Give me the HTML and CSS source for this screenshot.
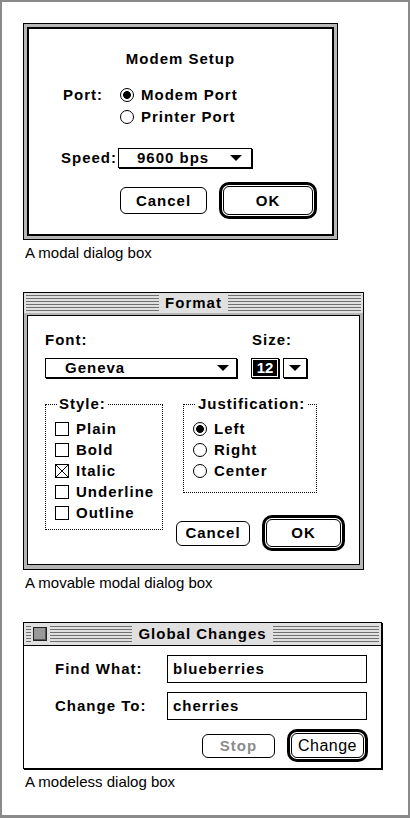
FILE: index.html
```html
<!DOCTYPE html>
<html lang="en">
<head>
    <meta charset="UTF-8">
    <title>Dialog Boxes</title>
    <link rel="stylesheet" href="styles.css">
</head>
<body>
    <div class="page">
        <!-- modal -->
        <section class="figure">
            <div class="dialog modal">
                <div class="modal-body">
                    <h2 class="modal-title">Modem Setup</h2>
                    <div class="port-row">
                        <span class="port-label">Port:</span>
                        <div class="radio-list">
                            <div class="radio on"><span class="rb"></span>Modem Port</div>
                            <div class="radio"><span class="rb"></span>Printer Port</div>
                        </div>
                    </div>
                    <div class="speed-row">
                        <span class="speed-label">Speed:</span>
                        <div class="popup speed-popup"><span>9600 bps</span><span class="arrow"></span></div>
                    </div>
                    <div class="btn-row modal-btns">
                        <button class="btn modal-cancel">Cancel</button>
                        <span class="default-ring modal-ok"><button class="btn">OK</button></span>
                    </div>
                </div>
            </div>
            <p class="caption">A modal dialog box</p>
        </section>

        <!-- movable modal -->
        <section class="figure">
            <div class="dialog movable">
                <div class="titlebar">
                    <span class="stripes"></span>
                    <span class="title-text">Format</span>
                    <span class="stripes"></span>
                </div>
                <div class="frame">
                    <div class="pane format-pane">
                        <div class="field-heads">
                            <span class="font-head">Font:</span>
                            <span>Size:</span>
                        </div>
                        <div class="popups">
                            <div class="popup font-popup"><span>Geneva</span><span class="arrow"></span></div>
                            <div class="size-box"><span>12</span></div>
                            <div class="popup size-popup"><span class="arrow"></span></div>
                        </div>
                        <div class="groups">
                            <div class="group style-group">
                                <span class="group-label">Style:</span>
                                <div class="check"><span class="cb"></span>Plain</div>
                                <div class="check"><span class="cb"></span>Bold</div>
                                <div class="check"><span class="cb"><svg viewBox="0 0 14 14" width="14" height="14"><path d="M1 1L13 13M13 1L1 13" stroke="#000" stroke-width="1"/></svg></span>Italic</div>
                                <div class="check"><span class="cb"></span>Underline</div>
                                <div class="check"><span class="cb"></span>Outline</div>
                            </div>
                            <div class="right-col">
                                <div class="group just-group">
                                    <span class="group-label">Justification:</span>
                                    <div class="radio on"><span class="rb"></span>Left</div>
                                    <div class="radio"><span class="rb"></span>Right</div>
                                    <div class="radio"><span class="rb"></span>Center</div>
                                </div>
                                <div class="btn-row format-btns">
                                    <button class="btn format-cancel">Cancel</button>
                                    <span class="default-ring format-ok"><button class="btn">OK</button></span>
                                </div>
                            </div>
                        </div>
                    </div>
                </div>
            </div>
            <p class="caption">A movable modal dialog box</p>
        </section>

        <!-- modeless -->
        <section class="figure">
            <div class="dialog modeless">
                <div class="titlebar">
                    <span class="tb-side">
                        <span class="stripes stub"></span>
                        <span class="close-box"></span>
                        <span class="stripes"></span>
                    </span>
                    <span class="title-text">Global Changes</span>
                    <span class="stripes"></span>
                </div>
                <div class="pane changes-pane">
                    <div class="find-grid">
                        <span>Find What:</span>
                        <div class="textfield">blueberries</div>
                        <span>Change To:</span>
                        <div class="textfield">cherries</div>
                    </div>
                    <div class="btn-row changes-btns">
                        <button class="btn stop-btn">Stop</button>
                        <span class="default-ring change-ok"><button class="btn change-btn">Change</button></span>
                    </div>
                </div>
            </div>
            <p class="caption">A modeless dialog box</p>
        </section>
    </div>
</body>
</html>
```

FILE: styles.css
```css
body {
    margin: 0;
    background: #fff;
}
.page {
    width: 410px;
    height: 818px;
    box-sizing: border-box;
    border: 2px solid #8a8a8a;
    border-bottom-width: 3px;
    padding: 21px 0 0 21px;
    font-family: "Liberation Sans", Arial, sans-serif;
    color: #000;
}
.figure {
    margin-bottom: 30px;
}
.caption {
    margin: 4px 0 0 2px;
    font-size: 15px;
    line-height: 18px;
}

/* shared dialog bits */
.dialog {
    box-sizing: border-box;
    font-size: 15px;
    font-weight: bold;
    letter-spacing: 1px;
    line-height: 18px;
    background: #fff;
}
.btn-row {
    display: flex;
    align-items: center;
}
.btn {
    box-sizing: border-box;
    border: 1px solid #000;
    border-radius: 6px;
    background: #fff;
    color: #000;
    font: inherit;
    letter-spacing: inherit;
    padding: 0;
}
.default-ring {
    display: flex;
    box-sizing: border-box;
    border: 3px solid #000;
    border-radius: 10px;
    padding: 1px;
}
.default-ring .btn {
    flex: 1;
}
.radio, .check {
    display: flex;
    align-items: center;
}
.rb {
    width: 14px;
    height: 14px;
    box-sizing: border-box;
    border: 1px solid #000;
    border-radius: 50%;
    margin-right: 7px;
    flex: none;
}
.radio.on .rb {
    background: radial-gradient(circle, #000 0 3.6px, #fff 4.2px);
}
.cb {
    width: 14px;
    height: 14px;
    box-sizing: border-box;
    border: 1px solid #000;
    margin-right: 7px;
    flex: none;
    display: flex;
}
.cb svg {
    margin: -1px;
}
.popup {
    display: flex;
    align-items: center;
    justify-content: space-between;
    box-sizing: border-box;
    height: 20px;
    border: 1px solid #000;
    box-shadow: 1px 1px 0 #000;
    background: #fff;
}
.arrow {
    width: 0;
    height: 0;
    border-left: 6px solid transparent;
    border-right: 6px solid transparent;
    border-top: 6px solid #000;
}
.titlebar {
    display: flex;
    align-items: center;
    padding: 0 2px;
    background: #e0e0e0;
}
.stripes {
    flex: 1;
    height: 16px;
    background: repeating-linear-gradient(to bottom, #707070 0 1px, #e0e0e0 1px 3px);
}
.title-text {
    padding: 0 6px;
}

/* modal */
.modal {
    width: 315px;
    height: 217px;
    border: 1px solid #000;
    padding: 3px;
    background: #b6b6b6;
}
.modal-body {
    height: 100%;
    box-sizing: border-box;
    border: 2px solid #000;
    background: #fff;
    padding-top: 21px;
}
.modal-title {
    margin: 0;
    text-align: center;
    font-size: 15px;
    line-height: 18px;
}
.port-row {
    display: flex;
    margin-top: 16px;
    padding-left: 34px;
}
.port-label {
    width: 57px;
    line-height: 22px;
}
.radio-list .radio {
    height: 22px;
}
.speed-row {
    display: flex;
    align-items: center;
    margin-top: 20px;
    padding-left: 32px;
}
.speed-label {
    width: 57px;
}
.speed-popup {
    width: 134px;
    padding: 0 9px 0 18px;
}
.modal-btns {
    margin-top: 14px;
    padding-left: 91px;
}
.modal-cancel {
    width: 87px;
    height: 27px;
    margin-right: 12px;
}
.modal-ok {
    width: 98px;
    height: 37px;
}

/* movable modal */
.movable {
    width: 341px;
    height: 278px;
    border: 1px solid #000;
    display: flex;
    flex-direction: column;
}
.movable .titlebar {
    height: 20px;
}
.frame {
    flex: 1;
    display: flex;
    padding: 2px 3px 4px;
    background: #b6b6b6;
}
.format-pane {
    flex: 1;
    border: 1px solid #000;
    background: #fff;
    padding: 15px 0 0 17px;
}
.field-heads {
    display: flex;
}
.font-head {
    width: 207px;
}
.popups {
    display: flex;
    margin-top: 9px;
}
.font-popup {
    width: 192px;
    padding: 0 7px 0 19px;
}
.size-box {
    box-sizing: border-box;
    width: 28px;
    height: 20px;
    margin-left: 14px;
    border: 1px solid #000;
    box-shadow: 1px 1px 0 #000;
    padding: 1px;
    display: flex;
}
.size-box span {
    flex: 1;
    background: #000;
    color: #fff;
    text-align: center;
    letter-spacing: 0;
    line-height: 16px;
}
.size-popup {
    width: 24px;
    margin-left: 4px;
    justify-content: center;
}
.groups {
    display: flex;
    align-items: flex-start;
    margin-top: 26px;
}
.group {
    box-sizing: border-box;
    border: 1px dotted #000;
    display: flex;
    flex-direction: column;
}
.group-label {
    align-self: flex-start;
    margin-top: -10px;
    padding: 0 2px;
    background: #fff;
}
.group .check, .group .radio {
    height: 21px;
    padding-left: 9px;
}
.style-group {
    width: 118px;
    padding-bottom: 6px;
}
.style-group .group-label {
    margin-left: 11px;
}
.style-group .group-label + .check, .just-group .group-label + .radio {
    margin-top: 5px;
}
.right-col {
    margin-left: 13px;
}
.just-group {
    width: 134px;
    margin-left: 7px;
    padding-bottom: 11px;
}
.just-group .group-label {
    margin-left: 12px;
}
.format-btns {
    margin-top: 22px;
}
.format-cancel {
    width: 74px;
    height: 25px;
    margin-right: 12px;
}
.format-ok {
    width: 83px;
    height: 36px;
}

/* modeless */
.modeless {
    width: 359px;
    height: 147px;
    border: 1px solid #000;
    box-shadow: 1px 1px 0 #000;
}
.modeless .titlebar {
    height: 22px;
    border-bottom: 1px solid #000;
}
.tb-side {
    flex: 1;
    display: flex;
    align-items: center;
}
.stripes.stub {
    flex: none;
    width: 5px;
}
.close-box {
    box-sizing: border-box;
    width: 14px;
    height: 14px;
    margin: 0 3px 0 2px;
    border: 1px solid #222;
    background: #999;
    box-shadow: inset -1px -1px 0 #555;
}
.changes-pane {
    padding: 9px 13px 0 31px;
}
.find-grid {
    display: grid;
    grid-template-columns: 112px 200px;
    grid-auto-rows: 28px;
    row-gap: 9px;
    align-items: center;
}
.textfield {
    box-sizing: border-box;
    height: 28px;
    border: 1px solid #000;
    padding-left: 5px;
    display: flex;
    align-items: center;
}
.changes-btns {
    justify-content: flex-end;
    margin-top: 9px;
}
.stop-btn {
    width: 73px;
    height: 24px;
    margin-right: 12px;
    color: #8c8c8c;
}
.change-ok {
    width: 81px;
    height: 33px;
}
.change-btn {
    font-weight: normal;
    font-size: 16px;
    letter-spacing: 0.5px;
}
```
